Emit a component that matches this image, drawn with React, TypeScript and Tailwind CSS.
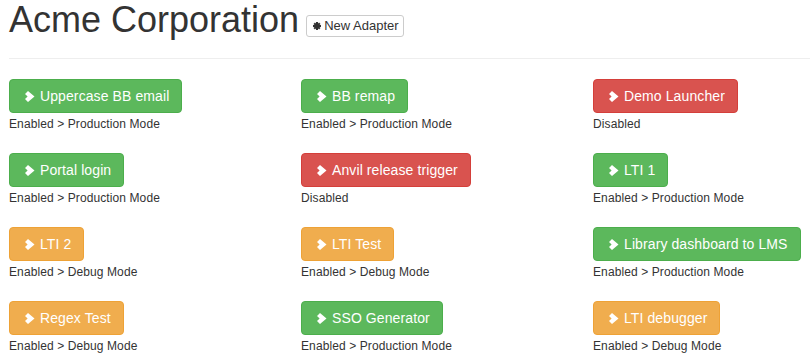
import React from "react";

type Adapter = { name: string; color: "green" | "red" | "orange"; status: string };

const rows: Adapter[][] = [
  [
    { name: "Uppercase BB email", color: "green", status: "Enabled > Production Mode" },
    { name: "BB remap", color: "green", status: "Enabled > Production Mode" },
    { name: "Demo Launcher", color: "red", status: "Disabled" },
  ],
  [
    { name: "Portal login", color: "green", status: "Enabled > Production Mode" },
    { name: "Anvil release trigger", color: "red", status: "Disabled" },
    { name: "LTI 1", color: "green", status: "Enabled > Production Mode" },
  ],
  [
    { name: "LTI 2", color: "orange", status: "Enabled > Debug Mode" },
    { name: "LTI Test", color: "orange", status: "Enabled > Debug Mode" },
    { name: "Library dashboard to LMS", color: "green", status: "Enabled > Production Mode" },
  ],
  [
    { name: "Regex Test", color: "orange", status: "Enabled > Debug Mode" },
    { name: "SSO Generator", color: "green", status: "Enabled > Production Mode" },
    { name: "LTI debugger", color: "orange", status: "Enabled > Debug Mode" },
  ],
];

const colorClass: Record<Adapter["color"], string> = {
  green: "bg-[#5cb85c] border-[#4cae4c]",
  red: "bg-[#d9534f] border-[#d43f3a]",
  orange: "bg-[#f0ad4e] border-[#eea236]",
};

function Chevron() {
  return (
    <svg width="10" height="11" viewBox="0 0 10 11" className="shrink-0">
      <polygon points="0,3 3,0 9.5,5.5 3,11 0,8 2.6,5.5" fill="white" />
    </svg>
  );
}

function Asterisk() {
  return (
    <svg width="8" height="8" viewBox="0 0 8 8" className="shrink-0">
      <g stroke="#333" strokeWidth="2">
        <line x1="4" y1="0" x2="4" y2="8" />
        <line x1="0" y1="4" x2="8" y2="4" />
        <line x1="1.2" y1="1.2" x2="6.8" y2="6.8" />
        <line x1="1.2" y1="6.8" x2="6.8" y2="1.2" />
      </g>
    </svg>
  );
}

export default function App() {
  return (
    <div
      className="w-[810px] h-[361px] overflow-hidden bg-white pl-[9px] text-[#333]"
      style={{ fontFamily: '"Liberation Sans", Arial, sans-serif' }}
    >
      <div className="flex items-start h-[40px]">
        <h1 className="text-[36px] leading-[40px] font-normal m-0">Acme Corporation</h1>
        <button className="ml-[7px] mt-[15px] h-[22px] inline-flex items-center gap-[3px] pl-[6px] pr-[4px] border border-[#ccc] rounded-[3px] bg-white text-[13px] leading-[18px] text-[#333]">
          <Asterisk />
          <span>New Adapter</span>
        </button>
      </div>
      <div className="mt-[18px] border-t border-[#eee]" />
      <div className="mt-[20px] grid grid-cols-[292px_292px_1fr]">
        {rows.flat().map((a) => (
          <div key={a.name} className="mb-[20px]">
            <div
              className={`inline-flex items-center h-[34px] border rounded-[4px] pl-[15px] pr-[12px] text-white text-[14px] leading-[20px] ${colorClass[a.color]}`}
            >
              <Chevron />
              <span className="ml-[5px] tracking-[0.1px]">{a.name}</span>
            </div>
            <div className="mt-[3px] text-[12px] leading-[17px] tracking-[0.1px]">{a.status}</div>
          </div>
        ))}
      </div>
    </div>
  );
}
